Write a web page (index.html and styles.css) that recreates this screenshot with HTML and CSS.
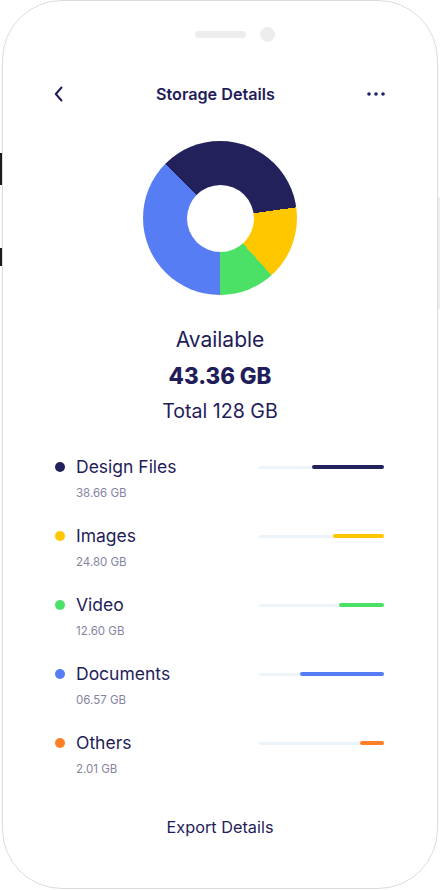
FILE: index.html
```html
<!DOCTYPE html>
<html lang="en">
<head>
<meta charset="utf-8">
<title>Storage Details</title>
<link rel="stylesheet" href="styles.css">
</head>
<body>
<div class="phone">
  <span class="side-btn side-btn-1"></span>
  <span class="side-btn side-btn-2"></span>
  <span class="side-btn-right"></span>
  <div class="notch">
    <span class="speaker"></span>
    <span class="camera"></span>
  </div>
  <header class="topbar">
    <svg class="back" width="10" height="16" viewBox="0 0 10 16"><path d="M7.5 1.5 L1.8 8 L7.5 14.5" fill="none" stroke="#1f1d5a" stroke-width="2" stroke-linecap="round" stroke-linejoin="round"/></svg>
    <h1 class="title">Storage Details</h1>
    <svg class="more" width="18" height="6" viewBox="0 0 18 6"><circle cx="2" cy="3" r="1.8" fill="#1f1d5a"/><circle cx="9" cy="3" r="1.8" fill="#1f1d5a"/><circle cx="16" cy="3" r="1.8" fill="#1f1d5a"/></svg>
  </header>
  <div class="chart-wrap">
    <div class="donut"><div class="hole"></div></div>
  </div>
  <div class="summary">
    <div class="avail-label">Available</div>
    <div class="avail-value">43.36 GB</div>
    <div class="total">Total 128 GB</div>
  </div>
  <ul class="list">
    <li class="item">
      <span class="dot dot-navy"></span>
      <span class="name">Design Files</span>
      <span class="bar"><span class="fill fill-navy" style="width:57.6%"></span></span>
      <span class="size">38.66 GB</span>
    </li>
    <li class="item">
      <span class="dot dot-yellow"></span>
      <span class="name">Images</span>
      <span class="bar"><span class="fill fill-yellow" style="width:40.8%"></span></span>
      <span class="size">24.80 GB</span>
    </li>
    <li class="item">
      <span class="dot dot-green"></span>
      <span class="name">Video</span>
      <span class="bar"><span class="fill fill-green" style="width:36%"></span></span>
      <span class="size">12.60 GB</span>
    </li>
    <li class="item">
      <span class="dot dot-blue"></span>
      <span class="name">Documents</span>
      <span class="bar"><span class="fill fill-blue" style="width:67.2%"></span></span>
      <span class="size">06.57 GB</span>
    </li>
    <li class="item">
      <span class="dot dot-orange"></span>
      <span class="name">Others</span>
      <span class="bar"><span class="fill fill-orange" style="width:19.2%"></span></span>
      <span class="size">2.01 GB</span>
    </li>
  </ul>
  <div class="export">Export Details</div>
</div>
</body>
</html>
```
FILE: styles.css
```css
* { box-sizing: border-box; }
html, body { margin: 0; padding: 0; background: #ffffff; }
body {
  font-family: "Inter", "Lato", "Liberation Sans", sans-serif;
  color: #1f1d5a;
}
.phone {
  position: relative;
  width: 436px;
  height: 889px;
  margin-left: 2px;
  border: 1px solid #dcdcdc;
  border-radius: 60px;
  background: #ffffff;
}
.side-btn {
  position: absolute;
  left: -3px;
  width: 2px;
  background: #1c1c1c;
}
.side-btn-1 { top: 152px; height: 32px; }
.side-btn-2 { top: 247px; height: 18px; }
.side-btn-right {
  position: absolute;
  right: -3px;
  top: 196px;
  width: 2px;
  height: 112px;
  background: #eeeeee;
}
.notch {
  display: flex;
  justify-content: center;
  align-items: center;
  padding-top: 26px;
  height: 41px;
  gap: 14px;
}
.speaker {
  width: 51px;
  height: 7px;
  border-radius: 4px;
  background: #ededed;
  margin-left: 29px;
}
.camera {
  width: 15px;
  height: 15px;
  border-radius: 50%;
  background: #ededed;
}
.topbar {
  display: flex;
  align-items: center;
  justify-content: space-between;
  height: 24px;
  margin-top: 40px;
  padding: 0 52px 0 51px;
}
.back { display: block; }
.more { display: block; }
.title {
  margin: 0;
  font-size: 16.2px;
  font-weight: 600;
  color: #1f1d5a;
}
.chart-wrap {
  display: flex;
  justify-content: center;
  margin-top: 35px;
}
.donut {
  width: 154px;
  height: 154px;
  border-radius: 50%;
  background: conic-gradient(from 0deg,
    #22215b 0deg 82deg,
    #ffc700 82deg 138deg,
    #4be166 138deg 180deg,
    #567df4 180deg 315deg,
    #22215b 315deg 360deg);
  display: flex;
  align-items: center;
  justify-content: center;
}
.hole {
  width: 67px;
  height: 67px;
  border-radius: 50%;
  background: #ffffff;
}
.summary {
  display: flex;
  flex-direction: column;
  align-items: center;
  margin-top: 33px;
}
.avail-label {
  font-size: 21px;
  line-height: 24px;
}
.avail-value {
  font-size: 22.3px;
  line-height: 28px;
  font-weight: 800;
  margin-top: 10px;
}
.total {
  font-size: 19.6px;
  line-height: 24px;
  margin-top: 9px;
}
.list {
  list-style: none;
  margin: 33px 0 0;
  padding: 0 53px 0 52px;
  display: flex;
  flex-direction: column;
  gap: 24px;
}
.item {
  display: grid;
  grid-template-columns: 10px 1fr 125px;
  grid-template-rows: 22px 16px;
  column-gap: 11px;
  row-gap: 7px;
  align-items: center;
}
.dot {
  width: 10px;
  height: 10px;
  border-radius: 50%;
}
.dot-navy { background: #22215b; }
.dot-yellow { background: #ffc700; }
.dot-green { background: #4be166; }
.dot-blue { background: #567df4; }
.dot-orange { background: #ff7f27; }
.name {
  font-size: 17.5px;
  line-height: 22px;
}
.size {
  grid-column: 2;
  font-size: 11.5px;
  line-height: 16px;
  color: #85849f;
}
.bar {
  height: 3px;
  border-radius: 2px;
  background: #edf4f9;
  display: flex;
  justify-content: flex-end;
  align-items: center;
}
.fill {
  height: 4px;
  border-radius: 2px;
}
.fill-navy { background: #22215b; }
.fill-yellow { background: #ffc700; }
.fill-green { background: #4be166; }
.fill-blue { background: #567df4; }
.fill-orange { background: #ff7f27; }
.export {
  text-align: center;
  margin-top: 40px;
  font-size: 16.3px;
  line-height: 20px;
}
```
